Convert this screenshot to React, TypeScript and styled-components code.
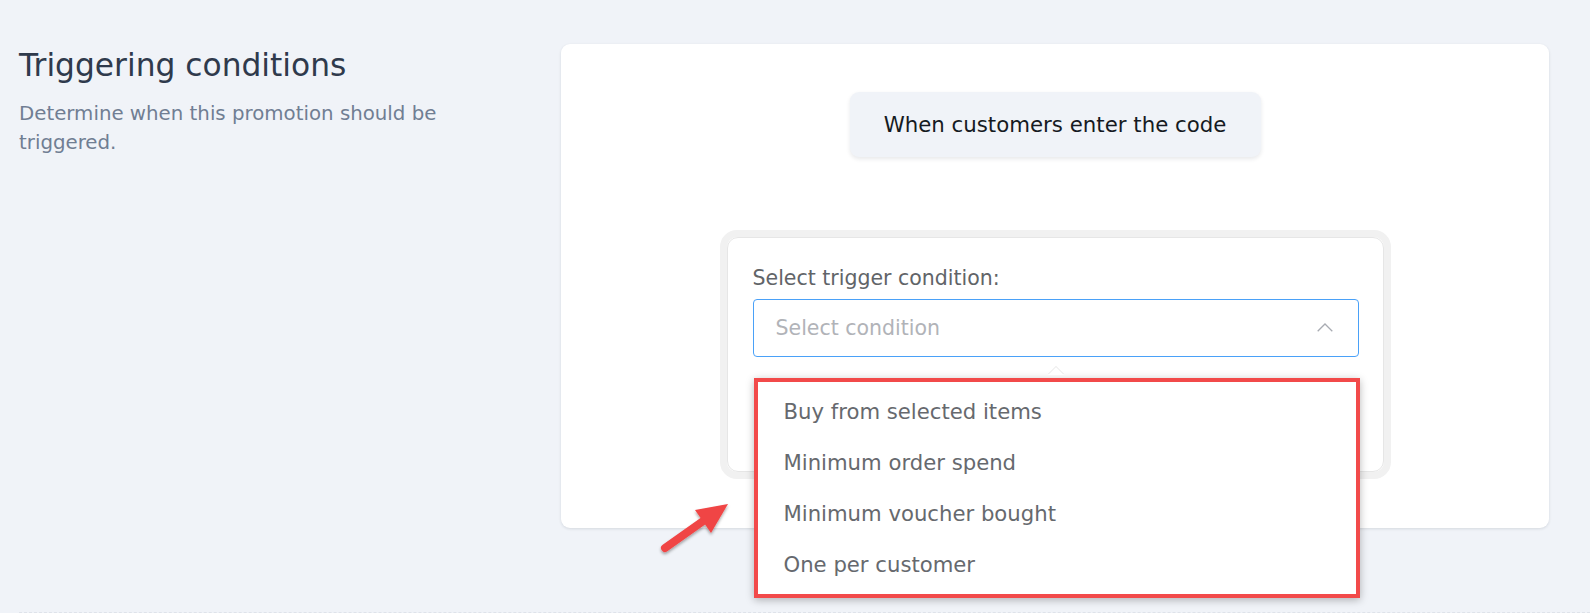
import React from 'react';
import styled, { createGlobalStyle } from 'styled-components';

const GlobalStyle = createGlobalStyle`
  html, body {
    margin: 0;
    padding: 0;
    background: #f0f3f8;
    font-family: "DejaVu Sans", "Open Sans", sans-serif;
  }
`;

const conditions = [
  'Buy from selected items',
  'Minimum order spend',
  'Minimum voucher bought',
  'One per customer',
];

const Page = styled.div`
  position: relative;
  width: 1590px;
  height: 613px;
  box-sizing: border-box;
  padding: 44px 41px 0 19px;
  overflow: hidden;
`;

const Section = styled.div`
  display: grid;
  grid-template-columns: 542px 1fr;
  align-items: start;
`;

const Intro = styled.div`
  padding-top: 1px;
`;

const Title = styled.h2`
  margin: 0;
  font-size: 31.3px;
  font-weight: 400;
  line-height: 40px;
  color: #2f3a4c;
`;

const Description = styled.p`
  margin: 14px 0 0;
  max-width: 440px;
  font-size: 19.8px;
  line-height: 29px;
  color: #707e93;
`;

const Card = styled.div`
  background: #fff;
  border-radius: 9px;
  box-shadow: 0 1px 3px rgba(20, 30, 50, 0.12);
  padding: 48px 0 49px;
  display: flex;
  flex-direction: column;
  align-items: center;
`;

const TriggerPill = styled.div`
  width: 411px;
  height: 65px;
  box-sizing: border-box;
  display: flex;
  align-items: center;
  justify-content: center;
  background: #f0f3f8;
  border-radius: 9px;
  box-shadow: 0 2px 4px rgba(20, 30, 50, 0.1);
  font-size: 21.3px;
  color: #151a22;
`;

const ConditionFrame = styled.div`
  margin-top: 73px;
  width: 671px;
  box-sizing: border-box;
  border: 7px solid #f1f1f1;
  border-radius: 17px;
`;

const ConditionBox = styled.div`
  border: 1px solid #e6e6e6;
  border-radius: 11px;
  background: #fff;
  padding: 27px 24px 114px 25px;
`;

const Label = styled.div`
  font-size: 20.5px;
  line-height: 26px;
  color: #616468;
  margin-bottom: 8px;
`;

const SelectWrap = styled.div`
  position: relative;
`;

const SelectBox = styled.div`
  height: 58px;
  box-sizing: border-box;
  border: 1px solid #4aa1f8;
  border-radius: 4px;
  display: flex;
  align-items: center;
  justify-content: space-between;
  padding: 0 25px 0 22px;
`;

const Placeholder = styled.span`
  font-size: 20.5px;
  color: #b1b3b8;
`;

const Chevron = styled.svg`
  width: 16px;
  height: 9px;
  margin-top: -2px;
`;

const Dropdown = styled.div`
  position: absolute;
  top: 79px;
  left: 1px;
  right: -1px;
  background: #fff;
  border: 4px solid #f24a4a;
  box-shadow: 0 2px 8px rgba(0, 0, 0, 0.28);
  padding: 4px 0;
  z-index: 2;
`;

const Caret = styled.div`
  position: absolute;
  top: -15px;
  left: 50%;
  margin-left: -9px;
  width: 0;
  height: 0;
  border-left: 8px solid transparent;
  border-right: 8px solid transparent;
  border-bottom: 8px solid #fff;
  filter: drop-shadow(0 -1px 0 #e6e6e6);
`;

const Option = styled.div`
  height: 51px;
  display: flex;
  align-items: center;
  padding: 0 26px;
  font-size: 21.2px;
  color: #66696e;
`;

const Arrow = styled.svg`
  position: absolute;
  left: 650px;
  top: 495px;
  width: 80px;
  height: 64px;
  overflow: visible;
`;

const Divider = styled.div`
  position: absolute;
  left: 19px;
  right: 0;
  bottom: 0;
  border-bottom: 1px dashed #dfe3ea;
`;

export default function App() {
  return (
    <>
      <GlobalStyle />
      <Page>
        <Section>
          <Intro>
            <Title>Triggering conditions</Title>
            <Description>Determine when this promotion should be triggered.</Description>
          </Intro>
          <Card>
            <TriggerPill>When customers enter the code</TriggerPill>
            <ConditionFrame>
              <ConditionBox>
                <Label>Select trigger condition:</Label>
                <SelectWrap>
                  <SelectBox>
                    <Placeholder>Select condition</Placeholder>
                    <Chevron viewBox="0 0 16 9">
                      <path d="M0.7 8.3 L8 1 L15.3 8.3" fill="none" stroke="#a8abb2" strokeWidth="1.3" />
                    </Chevron>
                  </SelectBox>
                  <Dropdown>
                    <Caret />
                    {conditions.map((c) => (
                      <Option key={c}>{c}</Option>
                    ))}
                  </Dropdown>
                </SelectWrap>
              </ConditionBox>
            </ConditionFrame>
          </Card>
        </Section>
        <Arrow viewBox="0 0 80 64">
          <defs>
            <filter id="arrowShadow" x="-30%" y="-30%" width="160%" height="160%">
              <feDropShadow dx="0" dy="2" stdDeviation="1.5" floodColor="#000" floodOpacity="0.35" />
            </filter>
          </defs>
          <g filter="url(#arrowShadow)">
            <line x1="15" y1="53" x2="56" y2="24" stroke="#f04545" strokeWidth="8" strokeLinecap="round" />
            <polygon points="78,9 45,15 61,38" fill="#f04545" />
          </g>
        </Arrow>
        <Divider />
      </Page>
    </>
  );
}
